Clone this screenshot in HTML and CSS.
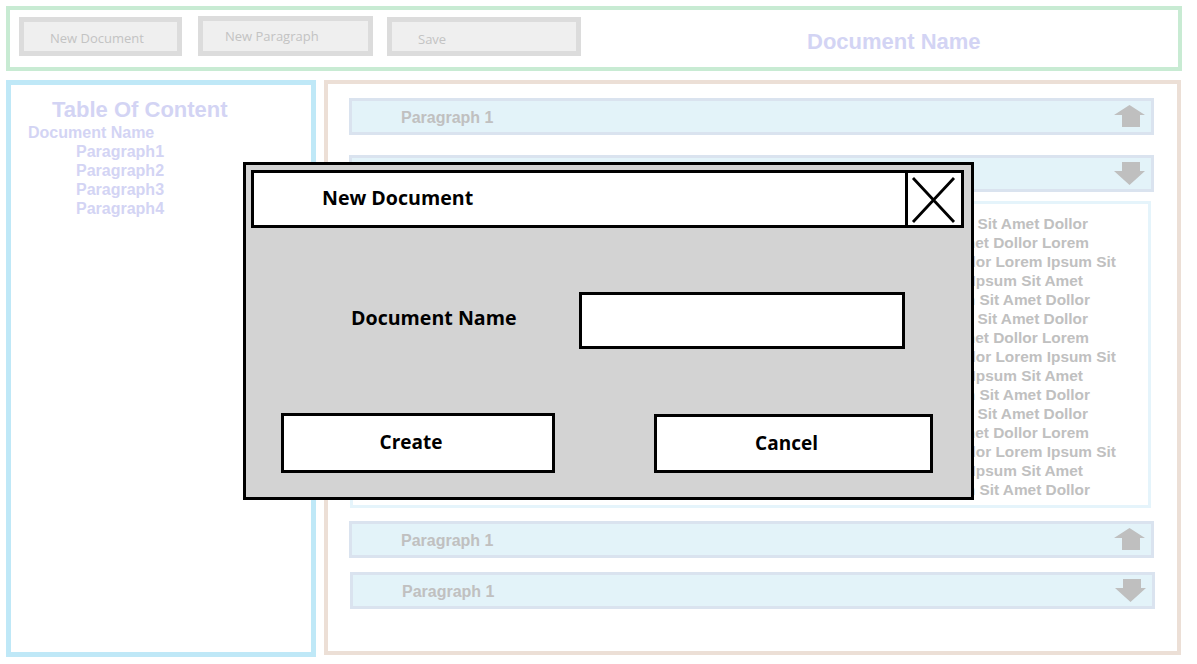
FILE: index.html
```html
<!DOCTYPE html>
<html lang="en">
<head>
<meta charset="utf-8">
<title>Document Editor</title>
<link rel="stylesheet" href="styles.css">
</head>
<body>
<div class="app">
  <header class="toolbar">
    <button class="tool-btn tool-btn--doc">New Document</button>
    <button class="tool-btn tool-btn--para">New Paragraph</button>
    <button class="tool-btn tool-btn--save">Save</button>
    <div class="doc-title">Document Name</div>
  </header>

  <main class="workspace">
    <aside class="toc">
      <div class="toc-title">Table Of Content</div>
      <div class="toc-doc">Document Name</div>
      <div class="toc-item">Paragraph1</div>
      <div class="toc-item">Paragraph2</div>
      <div class="toc-item">Paragraph3</div>
      <div class="toc-item">Paragraph4</div>
    </aside>

    <section class="editor">
      <div class="para-bar">
        <span class="para-name">Paragraph 1</span>
        <svg class="arrow" width="31" height="23" viewBox="0 0 31 23"><polygon points="15.5,0 31,10 26,10 26,22 8,22 8,10 0,10"/></svg>
      </div>
      <div class="para-bar para-bar--second">
        <span class="para-name">Paragraph 1</span>
        <svg class="arrow" width="31" height="23" viewBox="0 0 31 23"><polygon points="8,0 26,0 26,9 31,9 15.5,23 0,9 8,9"/></svg>
      </div>
      <div class="para-text">
        <span class="line line--a">Lorem Ipsum Sit Amet Dollor</span>
        <span class="line line--b">Ipsum Sit Amet Dollor Lorem</span>
        <span class="line line--c">Amet Dollor Lorem Ipsum Sit</span>
        <span class="line line--d">Lorem Ipsum Sit Amet</span>
        <span class="line line--e">Lorem Ipsum Sit Amet Dollor</span>
        <span class="line line--a">Lorem Ipsum Sit Amet Dollor</span>
        <span class="line line--b">Ipsum Sit Amet Dollor Lorem</span>
        <span class="line line--c">Amet Dollor Lorem Ipsum Sit</span>
        <span class="line line--d">Lorem Ipsum Sit Amet</span>
        <span class="line line--e">Lorem Ipsum Sit Amet Dollor</span>
        <span class="line line--a">Lorem Ipsum Sit Amet Dollor</span>
        <span class="line line--b">Ipsum Sit Amet Dollor Lorem</span>
        <span class="line line--c">Amet Dollor Lorem Ipsum Sit</span>
        <span class="line line--d">Lorem Ipsum Sit Amet</span>
        <span class="line line--e">Lorem Ipsum Sit Amet Dollor</span>
      </div>
      <div class="para-bar para-bar--third">
        <span class="para-name">Paragraph 1</span>
        <svg class="arrow" width="31" height="23" viewBox="0 0 31 23"><polygon points="15.5,0 31,10 26,10 26,22 8,22 8,10 0,10"/></svg>
      </div>
      <div class="para-bar para-bar--fourth">
        <span class="para-name">Paragraph 1</span>
        <svg class="arrow" width="31" height="23" viewBox="0 0 31 23"><polygon points="8,0 26,0 26,9 31,9 15.5,23 0,9 8,9"/></svg>
      </div>
    </section>
  </main>

  <div class="dialog">
    <div class="dialog-head">
      <div class="dialog-title">New Document</div>
      <div class="dialog-close">
        <svg width="53" height="52" viewBox="0 0 53 52"><path d="M5 5 L46 49 M46 5 L5 49" stroke="#000" stroke-width="2.8" fill="none"/></svg>
      </div>
    </div>
    <div class="dialog-row">
      <label class="dialog-label">Document Name</label>
      <div class="dialog-input"></div>
    </div>
    <div class="dialog-actions">
      <button class="dialog-btn dialog-btn--create">Create</button>
      <button class="dialog-btn dialog-btn--cancel">Cancel</button>
    </div>
  </div>
</div>
</body>
</html>
```

FILE: styles.css
```css
* { box-sizing: border-box; }

body {
  margin: 0;
  background: #ffffff;
  font-family: "Liberation Sans", Arial, sans-serif;
}

.app {
  position: relative;
  width: 1197px;
  height: 664px;
  overflow: hidden;
  padding: 6px 15px 0 6px;
}

/* ---------- toolbar ---------- */
.toolbar {
  height: 65px;
  border: 4px solid #c8ebd3;
  display: flex;
  align-items: flex-start;
  padding: 7px 0 0 9px;
}

.tool-btn {
  appearance: none;
  margin: 0;
  height: 39px;
  border: 5px solid #dcdcdc;
  background: #efefef;
  font-family: "Open Sans", "Liberation Sans", sans-serif;
  font-size: 13px;
  color: #c3c3c3;
  text-align: left;
  padding: 2px 0 0 26px;
  line-height: 20px;
}

.tool-btn--doc { width: 163px; }
.tool-btn--para { width: 175px; height: 40px; margin: -1px 0 0 16px; padding-left: 22px; padding-top: 0; }
.tool-btn--save { width: 194px; margin-left: 14px; padding-top: 5px; }

.doc-title {
  margin: 14px 0 0 226px;
  font-weight: bold;
  font-size: 22px;
  line-height: 22px;
  color: #d3d4f4;
}

/* ---------- workspace ---------- */
.workspace {
  display: flex;
  align-items: flex-start;
  gap: 8px;
  margin-top: 9px;
}

.toc {
  width: 310px;
  height: 577px;
  border: 5px solid #bfe8f7;
  padding-top: 12px;
  color: #d3d4f4;
  font-weight: bold;
}

.toc-title {
  font-size: 22px;
  line-height: 26px;
  padding-left: 41px;
}

.toc-doc {
  font-size: 16px;
  line-height: 19px;
  padding-left: 17px;
}

.toc-item {
  font-size: 16px;
  line-height: 19px;
  padding-left: 65px;
}

.editor {
  width: 857px;
  height: 575px;
  border: 4px solid #ecdfd6;
  padding: 14px 23px 0 21px;
  display: flex;
  flex-direction: column;
}

.para-bar {
  height: 37px;
  flex: none;
  border: 3px solid #dae3ef;
  background: #e3f3f9;
  display: flex;
  align-items: center;
  justify-content: space-between;
  padding: 0 6px 0 49px;
}

.para-bar--second { margin-top: 20px; }
.para-bar--third { margin-top: 13px; }
.para-bar--fourth { margin: 14px -1px 0 1px; }

.para-name {
  font-weight: bold;
  font-size: 16px;
  color: #c0c0c0;
  padding-top: 3px;
}

.arrow { fill: #bfbfbf; display: block; }

.para-text {
  flex: none;
  height: 307px;
  margin: 9px 3px 0 1px;
  border: 3px solid #e5f4fb;
  padding-top: 10px;
  overflow: hidden;
}

.line {
  display: block;
  white-space: nowrap;
  text-align: right;
  font-weight: bold;
  font-size: 15.4px;
  line-height: 19px;
  color: #c0c0c0;
}

.line--a { padding-right: 60px; }
.line--b { padding-right: 59px; }
.line--c { padding-right: 32px; }
.line--d { padding-right: 65px; }
.line--e { padding-right: 58px; }

/* ---------- dialog ---------- */
.dialog {
  position: absolute;
  left: 243px;
  top: 162px;
  width: 731px;
  height: 338px;
  border: 3px solid #000;
  background: #d3d3d3;
  padding: 5px 0 0 5px;
  font-family: "Open Sans", "Liberation Sans", sans-serif;
  font-weight: bold;
  color: #000;
}

.dialog-head {
  width: 713px;
  height: 58px;
  border: 3px solid #000;
  background: #fff;
  display: flex;
  align-items: center;
}

.dialog-title {
  flex: 1;
  padding: 0 0 3px 68px;
  font-size: 19.6px;
}

.dialog-close {
  align-self: stretch;
  width: 56px;
  border-left: 3px solid #000;
  display: flex;
  align-items: center;
  justify-content: center;
}

.dialog-close svg { display: block; }

.dialog-row {
  display: flex;
  align-items: center;
  margin: 64px 0 0 100px;
}

.dialog-label {
  width: 228px;
  font-size: 19.6px;
  padding-bottom: 6px;
}

.dialog-input {
  width: 326px;
  height: 57px;
  border: 3px solid #000;
  background: #fff;
}

.dialog-actions {
  display: flex;
  align-items: flex-start;
  margin: 64px 0 0 30px;
}

.dialog-btn {
  appearance: none;
  margin: 0;
  border: 3px solid #000;
  background: #fff;
  font-family: "Open Sans", "Liberation Sans", sans-serif;
  font-weight: bold;
  font-size: 19px;
  color: #000;
  padding: 0 14px 2px 0;
}

.dialog-btn--create { width: 274px; height: 60px; }
.dialog-btn--cancel { width: 279px; height: 59px; margin: 1px 0 0 99px; }
```
